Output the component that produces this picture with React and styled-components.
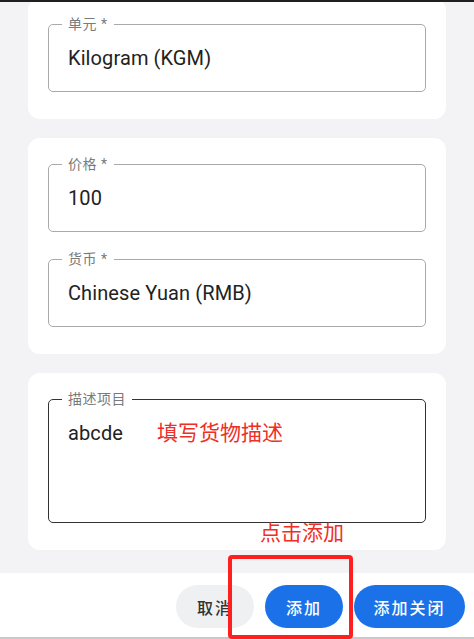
import React from 'react'
import styled, { createGlobalStyle } from 'styled-components'

const Global = createGlobalStyle`
  html, body { margin: 0; padding: 0; }
  body {
    font-family: Roboto, "Noto Sans CJK SC", sans-serif;
    background: #f3f3f5;
  }
`

const Screen = styled.div`
  position: relative;
  width: 474px;
  height: 639px;
  display: flex;
  flex-direction: column;
  overflow: hidden;
  border-top: 2px solid #1f1f1f;
  box-sizing: border-box;
  background: #f3f3f5;
`

const Scroll = styled.div`
  flex: 1;
  overflow: hidden;
  display: flex;
  flex-direction: column;
  gap: 19px;
  padding: 0 28px;
`

const Card = styled.div`
  background: #fff;
  border-radius: 12px;
  padding: 26px 20px 27px;
  display: flex;
  flex-direction: column;
  gap: 27px;
  margin-top: ${p => (p.$cut ? '-4px' : '0')};
`

const Field = styled.div`
  position: relative;
  height: ${p => p.$tall ? 124 : 68}px;
  box-sizing: border-box;
  border: ${p => p.$focus ? '1.5px solid #333' : '1px solid #aaa'};
  border-radius: 5px;
  display: flex;
  align-items: ${p => p.$tall ? 'flex-start' : 'center'};
  padding: ${p => p.$tall ? '21px 19px 0' : '0 19px'};
`

const Label = styled.span`
  position: absolute;
  top: -10px;
  left: 13px;
  padding: 0 6px;
  background: #fff;
  font-size: 14px;
  line-height: 18px;
  color: #7a7a7a;
  letter-spacing: 0.5px;
`

const Value = styled.span`
  font-size: 20px;
  color: #222;
  letter-spacing: 0.1px;
`

const Note = styled.span`
  position: absolute;
  font-size: 21px;
  line-height: 26px;
  color: #ef2e26;
  font-family: "Noto Sans CJK SC", sans-serif;
`

const Footer = styled.div`
  height: 66px;
  background: #fff;
  border-bottom: 2px solid #c9c9c9;
  box-sizing: border-box;
  display: flex;
  justify-content: flex-end;
  align-items: flex-start;
  gap: 11px;
  padding: 12px 9px 0 0;
`

const Button = styled.button`
  height: 43px;
  border: none;
  border-radius: 22px;
  padding: 0 ${p => p.$wide ? 19.5 : 19}px;
  min-width: 78px;
  font-family: "Noto Sans CJK SC", sans-serif;
  font-size: 16px;
  font-weight: 500;
  letter-spacing: 2px;
  background: ${p => p.$primary ? '#1b72e8' : '#eff0f1'};
  color: ${p => p.$primary ? '#fff' : '#333'};
`

const Highlight = styled.div`
  position: absolute;
  left: 228px;
  top: 553px;
  width: 125px;
  height: 84px;
  box-sizing: border-box;
  border: 4px solid #ff1f1f;
  border-radius: 4px;
  pointer-events: none;
`

function TextField({ label, value, tall, focus }) {
  return (
    <Field $tall={tall} $focus={focus}>
      <Label>{label}</Label>
      <Value>{value}</Value>
    </Field>
  )
}

export default function App() {
  return (
    <Screen>
      <Global />
      <Scroll>
        <Card $cut>
          <TextField label="单元 *" value="Kilogram (KGM)" />
        </Card>
        <Card>
          <TextField label="价格 *" value="100" />
          <TextField label="货币 *" value="Chinese Yuan (RMB)" />
        </Card>
        <Card>
          <TextField label="描述项目" value="abcde" tall focus />
        </Card>
      </Scroll>
      <Footer>
        <Button>取消</Button>
        <Button $primary>添加</Button>
        <Button $primary $wide>添加关闭</Button>
      </Footer>
      <Note style={{ left: 157, top: 416 }}>填写货物描述</Note>
      <Note style={{ left: 260, top: 516 }}>点击添加</Note>
      <Highlight />
    </Screen>
  )
}
